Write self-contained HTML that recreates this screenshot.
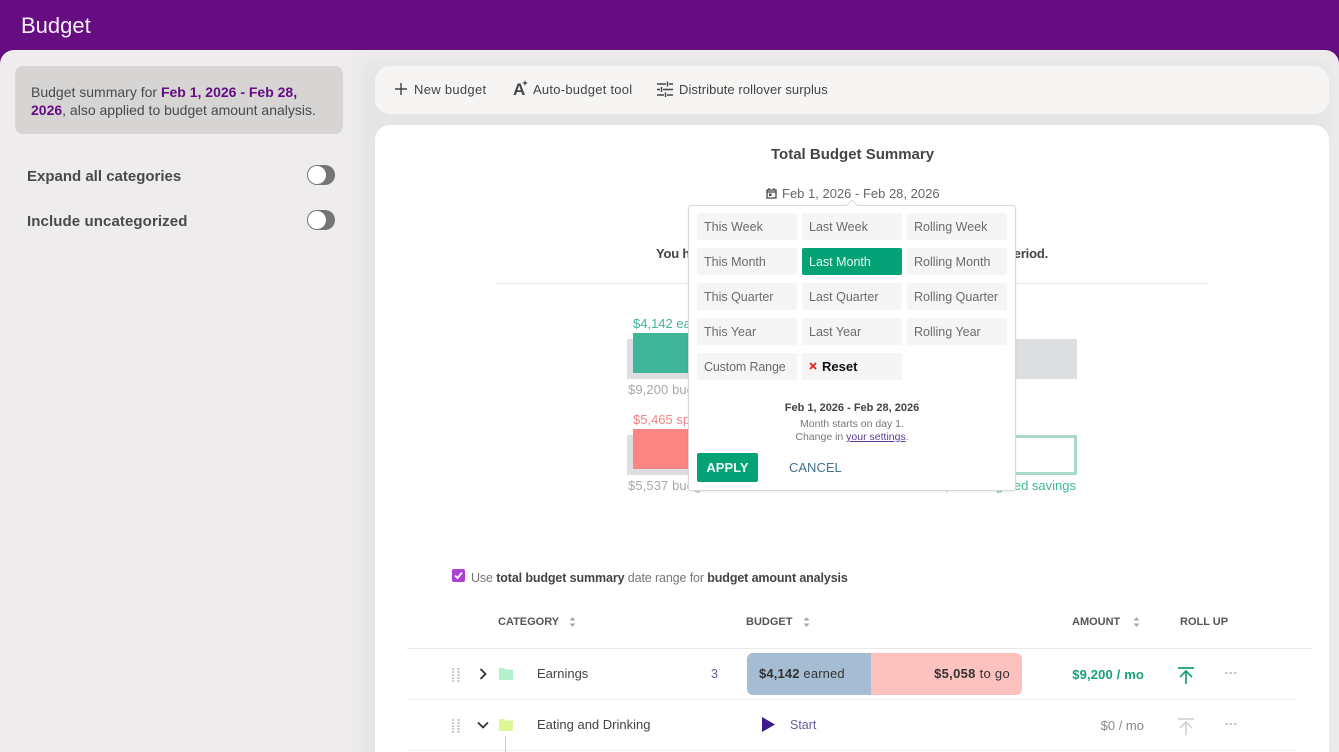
<!DOCTYPE html>
<html><head><meta charset="utf-8"><style>
html,body{margin:0;padding:0;width:1339px;height:752px;overflow:hidden}
body{position:relative;background:#660d82;font-family:"Liberation Sans",sans-serif;color:#444}
#r{position:absolute;left:0;top:0;width:1339px;height:752px;overflow:hidden;background:#660d82}
.a{position:absolute;white-space:nowrap}
.t{position:absolute;white-space:nowrap;line-height:16px;font-size:12.5px}
.b{position:absolute;width:100px;height:27px;background:#f5f5f5;border-radius:2px;line-height:29px;font-size:12.5px;color:#6b6b6b;text-indent:7px;white-space:nowrap}
</style></head><body><div id="r">
<div class="a" style="left:21px;top:12px;font-size:22px;line-height:27px;color:#f4eef6">Budget</div>
<div class="a" style="left:0;top:50px;width:1339px;height:702px;background:#eeecec;border-radius:14px 14px 0 0;overflow:hidden">
<div class="a" style="left:362px;top:12px;width:968px;height:700px;background:#e5e5e5;filter:blur(7px)"></div>
</div>

<div class="a" style="left:15px;top:66px;width:328px;height:68px;background:#d6d5d4;border-radius:8px"></div>
<div class="t" style="left:31px;top:83px;font-size:14px;line-height:18px;color:#4a4a4a">Budget summary for <b style="color:#660d82">Feb 1, 2026 - Feb 28,</b><br><b style="color:#660d82">2026</b>, also applied to budget amount analysis.</div>
<div class="t" style="left:27px;top:168px;font-size:15px;line-height:18px;font-weight:bold;color:#4a4a4a">Expand all categories</div>
<div class="t" style="left:27px;top:213px;font-size:15px;line-height:18px;font-weight:bold;color:#4a4a4a;letter-spacing:.1px">Include uncategorized</div>
<div class="a" style="left:307px;top:165px;width:28px;height:20px;border-radius:10px;background:#757575"></div>
<div class="a" style="left:308px;top:166px;width:18px;height:18px;border-radius:9px;background:#fff"></div>
<div class="a" style="left:307px;top:210px;width:28px;height:20px;border-radius:10px;background:#757575"></div>
<div class="a" style="left:308px;top:211px;width:18px;height:18px;border-radius:9px;background:#fff"></div>

<div class="a" style="left:375px;top:66px;width:954px;height:48px;background:#f6f5f3;border-radius:15px"></div>
<svg class="a" style="left:394px;top:82px" width="14" height="14" viewBox="0 0 14 14"><path d="M7 1v12M1 7h12" stroke="#444" stroke-width="1.4" fill="none"/></svg>
<div class="t" style="left:414px;top:82px;font-size:13px;color:#444;letter-spacing:.3px">New budget</div>
<div class="a" style="left:513px;top:81px;font-size:17px;line-height:18px;font-weight:bold;color:#444">A</div>
<svg class="a" style="left:522px;top:80px" width="6" height="6" viewBox="0 0 6 6"><path d="M3 0l.8 2.2L6 3l-2.2.8L3 6l-.8-2.2L0 3l2.2-.8z" fill="#444"/></svg>
<div class="t" style="left:533px;top:82px;font-size:13px;color:#444;letter-spacing:.25px">Auto-budget tool</div>
<svg class="a" style="left:657px;top:81px" width="16" height="16" viewBox="0 0 16 16"><path d="M0 3h9M12 3h4M10.500 .5v5M0 8.500h3M6 8.500h10M4.500 6v5M0 14h7M10 14h6M8.500 11.500v4.500" stroke="#444" stroke-width="1.400" fill="none"/></svg>
<div class="t" style="left:679px;top:82px;font-size:13px;color:#444;letter-spacing:.08px">Distribute rollover surplus</div>

<div class="a" style="left:375px;top:125px;width:954px;height:640px;background:#fff;border-radius:15px"></div>
<div class="t" style="left:771px;top:147px;font-size:15px;font-weight:bold;color:#454545">Total Budget Summary</div>
<svg class="a" style="left:766px;top:187px" width="11" height="12" viewBox="0 0 11 12"><path d="M1 3h9v8H1zM1 5h9M3 1v2M8 1v2" stroke="#444" stroke-width="1.300" fill="none"/><rect x="3" y="6.500" width="2.500" height="2.500" fill="#444"/></svg>
<div class="t" style="left:782px;top:186px;font-size:13px;color:#666">Feb 1, 2026 - Feb 28, 2026</div>
<div class="t" style="left:656px;top:246px;font-size:13px;font-weight:bold;color:#444;letter-spacing:-.2px">You h</div>
<div class="t" style="right:291px;top:246px;font-size:13px;font-weight:bold;color:#444;letter-spacing:-.2px">eriod.</div>
<div class="a" style="left:496px;top:283px;width:712px;height:1px;background:#e8e8e8"></div>

<div class="a" style="left:627px;top:339px;width:450px;height:40px;background:#dddee1"></div>
<div class="a" style="left:633px;top:333px;width:70px;height:40px;background:#3fb59a"></div>
<div class="t" style="left:633px;top:316px;font-size:13px;color:#3fb59a">$4,142 earned</div>
<div class="t" style="left:628px;top:382px;font-size:13px;color:#a8a8a8;letter-spacing:.1px">$9,200 budgeted</div>
<div class="a" style="left:627px;top:435px;width:100px;height:40px;background:#dddee1"></div>
<div class="a" style="left:633px;top:429px;width:70px;height:40px;background:#fd8583"></div>
<div class="t" style="left:633px;top:412px;font-size:13px;color:#f28482">$5,465 spent</div>
<div class="t" style="left:628px;top:478px;font-size:13px;color:#a8a8a8;letter-spacing:.1px">$5,537 budgeted</div>
<div class="a" style="left:980px;top:435px;width:94px;height:34px;border:3px solid #a9d9cd;border-left:0"></div>
<div class="t" style="right:263px;top:478px;font-size:13px;color:#3fb59a">$3,663 budgeted savings</div>

<div class="a" style="left:688px;top:205px;width:326px;height:284px;background:#fff;border:1px solid #d8d8d8;border-radius:3px;box-shadow:0 1px 3px rgba(0,0,0,.08)"></div>
<div class="a" style="left:848px;top:201px;width:7px;height:7px;background:#fff;border-left:1px solid #d8d8d8;border-top:1px solid #d8d8d8;transform:rotate(45deg)"></div>
<div class="b" style="left:697px;top:213px">This Week</div>
<div class="b" style="left:802px;top:213px">Last Week</div>
<div class="b" style="left:907px;top:213px">Rolling Week</div>
<div class="b" style="left:697px;top:248px">This Month</div>
<div class="b" style="left:802px;top:248px;background:#04a276;color:#e9f7f3">Last Month</div>
<div class="b" style="left:907px;top:248px">Rolling Month</div>
<div class="b" style="left:697px;top:283px">This Quarter</div>
<div class="b" style="left:802px;top:283px">Last Quarter</div>
<div class="b" style="left:907px;top:283px">Rolling Quarter</div>
<div class="b" style="left:697px;top:318px">This Year</div>
<div class="b" style="left:802px;top:318px">Last Year</div>
<div class="b" style="left:907px;top:318px">Rolling Year</div>
<div class="b" style="left:697px;top:353px;letter-spacing:-.15px">Custom Range</div>
<div class="b" style="left:802px;top:353px"></div>
<svg class="a" style="left:809px;top:362px" width="8" height="8" viewBox="0 0 8 8"><path d="M1 1l6 6M7 1l-6 6" stroke="#e0261a" stroke-width="1.800" fill="none"/></svg>
<div class="t" style="left:822px;top:359px;font-size:13px;font-weight:bold;color:#111">Reset</div>
<div class="a" style="left:688px;top:401px;width:328px;text-align:center;font-size:11px;line-height:14px;font-weight:bold;color:#444">Feb 1, 2026 - Feb 28, 2026</div>
<div class="a" style="left:688px;top:418px;width:328px;text-align:center;font-size:10.500px;line-height:13px;color:#777">Month starts on day 1.<br>Change in <span style="color:#5b3b95;text-decoration:underline">your settings</span>.</div>
<div class="a" style="left:697px;top:453px;width:61px;height:29px;background:#04a276;border-radius:2px;color:#eaf8f4;font-size:13px;font-weight:bold;line-height:29px;text-align:center">APPLY</div>
<div class="t" style="left:789px;top:460px;font-size:13px;color:#3f7391">CANCEL</div>

<div class="a" style="left:452px;top:569px;width:13px;height:13px;background:#ab40d3;border-radius:2px"></div>
<svg class="a" style="left:452px;top:569px" width="13" height="13" viewBox="0 0 13 13"><path d="M3 6.500l2.500 2.500L10 3.500" stroke="#fff" stroke-width="1.800" fill="none"/></svg>
<div class="t" style="left:471px;top:570px;font-size:12.500px;color:#777;letter-spacing:-.12px">Use <b style="color:#444">total budget summary</b> date range for <b style="color:#444">budget amount analysis</b></div>

<div class="t" style="left:498px;top:614px;font-size:11px;font-weight:bold;color:#555">CATEGORY</div>
<div class="t" style="left:746px;top:614px;font-size:11px;font-weight:bold;color:#555">BUDGET</div>
<div class="t" style="left:1072px;top:614px;font-size:11px;font-weight:bold;color:#555">AMOUNT</div>
<div class="t" style="left:1180px;top:614px;font-size:11px;font-weight:bold;color:#555">ROLL UP</div>
<svg class="a" style="left:569px;top:617px" width="7" height="10" viewBox="0 0 7 10"><path d="M3.500 0L6.500 3.500h-6zM3.500 10L.5 6.500h6z" fill="#aaa"/></svg>
<svg class="a" style="left:803px;top:617px" width="7" height="10" viewBox="0 0 7 10"><path d="M3.500 0L6.500 3.500h-6zM3.500 10L.5 6.500h6z" fill="#aaa"/></svg>
<svg class="a" style="left:1133px;top:617px" width="7" height="10" viewBox="0 0 7 10"><path d="M3.500 0L6.500 3.500h-6zM3.500 10L.5 6.500h6z" fill="#aaa"/></svg>

<div class="a" style="left:407px;top:648px;width:905px;height:1px;background:#e8e8e8"></div>
<div class="a" style="left:407px;top:699px;width:890px;height:1px;background:#eee"></div>
<div class="a" style="left:407px;top:750px;width:890px;height:1px;background:#eee"></div>

<svg class="a" style="left:452px;top:668px" width="8" height="14" viewBox="0 0 8 14"><path d="M1 0v14M6.500 0v14" stroke="#ccc" stroke-width="2.500" stroke-dasharray="2 1" fill="none"/></svg>
<svg class="a" style="left:452px;top:719px" width="8" height="14" viewBox="0 0 8 14"><path d="M1 0v14M6.500 0v14" stroke="#ccc" stroke-width="2.500" stroke-dasharray="2 1" fill="none"/></svg>
<svg class="a" style="left:479px;top:668px" width="8" height="12" viewBox="0 0 8 12"><path d="M1.500 1l5 5-5 5" stroke="#333" stroke-width="1.800" fill="none"/></svg>
<svg class="a" style="left:477px;top:721px" width="12" height="8" viewBox="0 0 12 8"><path d="M1 1.500l5 5 5-5" stroke="#333" stroke-width="1.800" fill="none"/></svg>
<svg class="a" style="left:499px;top:668px" width="14" height="12" viewBox="0 0 14 12"><path d="M0 1q0-1 1-1h4l1.500 1.500H13q1 0 1 1V11q0 1-1 1H1q-1 0-1-1z" fill="#b3f0cc"/></svg>
<svg class="a" style="left:499px;top:719px" width="14" height="12" viewBox="0 0 14 12"><path d="M0 1q0-1 1-1h4l1.500 1.500H13q1 0 1 1V11q0 1-1 1H1q-1 0-1-1z" fill="#dcf794"/></svg>
<div class="a" style="left:505px;top:736px;width:1px;height:16px;background:#ccc"></div>
<div class="t" style="left:537px;top:666px;font-size:13px;color:#444">Earnings</div>
<div class="t" style="left:537px;top:717px;font-size:13px;color:#444">Eating and Drinking</div>
<div class="t" style="left:711px;top:666px;font-size:12.500px;color:#6a5a9c">3</div>

<div class="a" style="left:747px;top:653px;width:124px;height:42px;background:#a5bdd2;border-radius:6px 0 0 6px"></div>
<div class="a" style="left:871px;top:653px;width:151px;height:42px;background:#fdc1bf;border-radius:0 6px 6px 0"></div>
<div class="t" style="left:759px;top:666px;font-size:13px;color:#333;letter-spacing:.15px"><b style="color:#333">$4,142</b> earned</div>
<div class="t" style="right:329px;top:666px;font-size:13px;color:#333;letter-spacing:.3px"><b style="color:#333">$5,058</b> to go</div>
<svg class="a" style="left:762px;top:717px" width="13" height="15" viewBox="0 0 13 15"><path d="M0 0l13 7.500L0 15z" fill="#3c1a8c"/></svg>
<div class="t" style="left:790px;top:717px;font-size:12.500px;color:#6a5a9c">Start</div>

<div class="t" style="right:195px;top:667px;font-size:13px;font-weight:bold;color:#17a07b;letter-spacing:.15px">$9,200 / mo</div>
<div class="t" style="right:195px;top:718px;font-size:13px;color:#888">$0 / mo</div>
<svg class="a" style="left:1178px;top:667px" width="16" height="17" viewBox="0 0 16 17"><path d="M0 1h16M8 17V4M2 10l6-6 6 6" stroke="#17a07b" stroke-width="1.700" fill="none"/></svg>
<svg class="a" style="left:1178px;top:718px" width="16" height="17" viewBox="0 0 16 17"><path d="M0 1h16M8 17V4M2 10l6-6 6 6" stroke="#d4d4d4" stroke-width="1.700" fill="none"/></svg>
<svg class="a" style="left:1224px;top:671px" width="14" height="4" viewBox="0 0 14 4"><path d="M1 2h2.500M5.500 2H8M10 2h2.500" stroke="#c9c9c9" stroke-width="2" fill="none"/></svg>
<svg class="a" style="left:1224px;top:722px" width="14" height="4" viewBox="0 0 14 4"><path d="M1 2h2.500M5.500 2H8M10 2h2.500" stroke="#c9c9c9" stroke-width="2" fill="none"/></svg>
</div></body></html>
